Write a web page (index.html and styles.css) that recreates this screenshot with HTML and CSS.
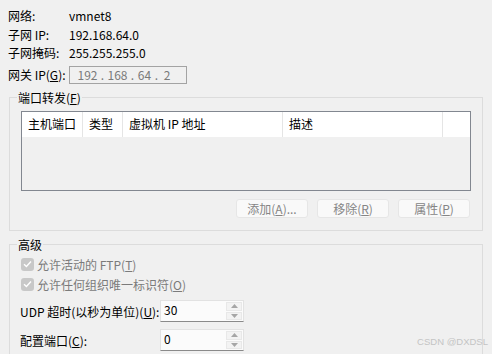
FILE: index.html
```html
<!DOCTYPE html>
<html lang="zh-CN">
<head>
<meta charset="utf-8">
<title>NAT 设置</title>
<link rel="stylesheet" href="styles.css">
</head>
<body>
<div class="page">
  <div class="info">
    <div class="row r1"><span class="lbl">网络:</span><span class="val">vmnet8</span></div>
    <div class="row r2"><span class="lbl">子网 IP:</span><span class="val">192.168.64.0</span></div>
    <div class="row r3"><span class="lbl">子网掩码:</span><span class="val">255.255.255.0</span></div>
    <div class="row gw"><span class="lbl">网关 IP(<u>G</u>):</span>
      <div class="ipbox"><span class="oct">192</span><span class="dot">.</span><span class="oct">168</span><span class="dot">.</span><span class="oct">64</span><span class="dot">.</span><span class="oct">2</span></div>
    </div>
  </div>

  <div class="group g1">
    <div class="legend">端口转发(<u>F</u>)</div>
    <div class="table">
      <div class="thead">
        <div class="th c1">主机端口</div>
        <div class="th c2">类型</div>
        <div class="th c3">虚拟机 IP 地址</div>
        <div class="th c4">描述</div>
        <div class="th c5"></div>
      </div>
    </div>
    <div class="btns">
      <div class="btn">添加(<u>A</u>)...</div>
      <div class="btn">移除(<u>R</u>)</div>
      <div class="btn">属性(<u>P</u>)</div>
    </div>
  </div>

  <div class="group g2">
    <div class="legend">高级</div>
    <div class="chk"><span class="box"><svg width="9" height="8" viewBox="0 0 9 8"><path d="M1 4.2 L3.4 6.5 L8 1.5" fill="none" stroke="#fff" stroke-width="1.4"/></svg></span><span class="ctext">允许活动的 FTP(<u>T</u>)</span></div>
    <div class="chk"><span class="box"><svg width="9" height="8" viewBox="0 0 9 8"><path d="M1 4.2 L3.4 6.5 L8 1.5" fill="none" stroke="#fff" stroke-width="1.4"/></svg></span><span class="ctext">允许任何组织唯一标识符(<u>O</u>)</span></div>
    <div class="field f1"><span class="flbl">UDP 超时(以秒为单位)(<u>U</u>):</span>
      <div class="spin"><span class="sval">30</span>
        <div class="arrows"><span class="ab"><svg width="7" height="4" viewBox="0 0 7 4"><path d="M0 4 L3.5 0 L7 4Z" fill="#a6a6a6"/></svg></span><span class="ab"><svg width="7" height="4" viewBox="0 0 7 4"><path d="M0 0 L3.5 4 L7 0Z" fill="#a6a6a6"/></svg></span></div>
      </div>
    </div>
    <div class="field f2"><span class="flbl">配置端口(<u>C</u>):</span>
      <div class="spin"><span class="sval">0</span>
        <div class="arrows"><span class="ab"><svg width="7" height="4" viewBox="0 0 7 4"><path d="M0 4 L3.5 0 L7 4Z" fill="#a6a6a6"/></svg></span><span class="ab"><svg width="7" height="4" viewBox="0 0 7 4"><path d="M0 0 L3.5 4 L7 0Z" fill="#a6a6a6"/></svg></span></div>
      </div>
    </div>
  </div>

  <div class="watermark">CSDN @DXDSL</div>
</div>
</body>
</html>
```

FILE: styles.css
```css
* { box-sizing: border-box; }
html, body {
  margin: 0;
  padding: 0;
  background: #f0f0f0;
  overflow: hidden;
}
body {
  font-family: "Noto Sans CJK SC", "Noto Sans", sans-serif;
  font-size: 12px;
  color: #000;
  width: 492px;
  height: 354px;
}
u { text-decoration: underline; text-underline-offset: 1px; }
.page {
  position: relative;
  width: 492px;
  height: 354px;
  overflow: hidden;
}
.info {
  padding: 7px 0 0 8px;
}
.row {
  display: flex;
  align-items: center;
  height: 18px;
  line-height: 18px;
}
.r2 { margin-top: 1px; }
.lbl { width: 61px; flex: none; white-space: nowrap; }
.val { white-space: nowrap; }
.gw { margin-top: 4px; }
.ipbox {
  width: 118px;
  height: 18px;
  border: 1px solid #a3a3a3;
  background: #f0f0f0;
  color: #7a7a7a;
  display: flex;
  align-items: center;
  padding-left: 7px;
  line-height: 16px;
}
.oct { display: inline-block; text-align: center; }
.ipbox .oct:nth-child(1) { width: 21px; }
.ipbox .oct:nth-child(3) { width: 21px; }
.ipbox .oct:nth-child(5) { width: 15px; }
.ipbox .oct:nth-child(7) { width: 12px; }
.dot { display: inline-block; width: 9px; text-align: center; }

.group {
  position: relative;
  margin-left: 9px;
  width: 474px;
  border: 1px solid #dcdcdc;
}
.legend {
  position: absolute;
  left: 7px;
  top: -9px;
  height: 17px;
  line-height: 17px;
  padding: 0 1px;
  background: #f0f0f0;
  white-space: nowrap;
}
.g1 {
  margin-top: 13px;
  padding: 13px 11px 12px 11px;
}
.table {
  width: 450px;
  height: 80px;
  border: 1px solid #828790;
  background: #f0f0f0;
}
.thead {
  display: flex;
  height: 25px;
  background: #fff;
}
.th {
  height: 25px;
  line-height: 24px;
  padding-left: 6px;
  border-right: 1px solid #e5e5e5;
  white-space: nowrap;
}
.c1 { width: 61px; }
.c2 { width: 40px; }
.c3 { width: 160px; }
.c4 { width: 160px; }
.c5 { flex: 1; border-right: none; }
.btns {
  display: flex;
  justify-content: flex-end;
  gap: 9px;
  margin-top: 8px;
  padding-right: 1px;
}
.btn {
  width: 72px;
  height: 19px;
  line-height: 17px;
  text-align: center;
  border: 1px solid #e6e6e6;
  border-radius: 3px;
  background: #f9f9f9;
  color: #858585;
  white-space: nowrap;
}

.g2 {
  margin-top: 13px;
  height: 110px;
  border-bottom: none;
  padding: 9px 10px 0 10px;
}
.chk {
  display: flex;
  align-items: center;
  height: 20px;
  padding-left: 1px;
  color: #7b7b7b;
}
.box {
  width: 13px;
  height: 13px;
  border-radius: 3px;
  background: #c8c8c8;
  display: flex;
  align-items: center;
  justify-content: center;
  margin-right: 3px;
  flex: none;
}
.ctext { white-space: nowrap; }
.field {
  display: flex;
  align-items: center;
}
.f1 { margin-top: 6px; }
.f2 { margin-top: 7px; }
.flbl { width: 140px; flex: none; white-space: nowrap; }
.spin {
  width: 84px;
  height: 22px;
  display: flex;
  justify-content: space-between;
  background: #fbfbfb;
  border: 1px solid #e2e2e2;
  border-bottom: 1px solid #8a8a8a;
}
.sval {
  padding-left: 3px;
  line-height: 17px;
}
.arrows {
  width: 17px;
  display: flex;
  flex-direction: column;
  gap: 1px;
  padding: 1px 1px 1px 0;
}
.ab {
  flex: 1;
  display: flex;
  align-items: center;
  justify-content: center;
  background: #f3f3f3;
  border: 1px solid #e8e8e8;
}
.watermark {
  position: absolute;
  right: 4px;
  top: 336px;
  font-family: "Liberation Sans", sans-serif;
  font-size: 9.5px;
  line-height: 12px;
  color: #c4c4c4;
  white-space: nowrap;
}
```
